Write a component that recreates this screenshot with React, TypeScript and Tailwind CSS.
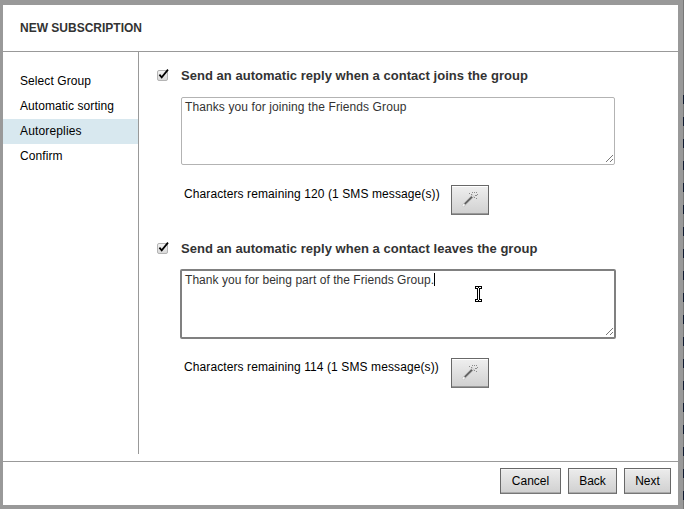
import React from "react";

const steps = ["Select Group", "Automatic sorting", "Autoreplies", "Confirm"];
const edgeMarks = Array.from({ length: 19 }, (_, i) => i);

function CheckBox() {
  return (
    <svg width="14" height="14" viewBox="0 0 14 14" className="shrink-0">
      <defs>
        <linearGradient id="box" x1="0" y1="0" x2="0" y2="1">
          <stop offset="0" stopColor="#f4f4f4" />
          <stop offset="1" stopColor="#d8d8d8" />
        </linearGradient>
      </defs>
      <rect x="1.5" y="2.5" width="10" height="10" rx="1.5" fill="url(#box)" stroke="#b4b4b4" />
      <path d="M3.4 6.6 L5.7 9.3 L12 1.6" fill="none" stroke="#000" strokeWidth="1.7" />
    </svg>
  );
}

function Wand() {
  return (
    <svg width="18" height="18" viewBox="0 0 18 18">
      <path d="M1.6 15.2 L12.6 4.2" stroke="#bdbdbd" strokeWidth="3" />
      <path d="M3.8 13 L11.2 5.6" stroke="#5c5c5c" strokeWidth="1.6" />
      <path d="M1.8 15 L3.4 13.4" stroke="#f4f4f4" strokeWidth="1.8" />
      <path d="M11 5.8 L12.6 4.2" stroke="#dedede" strokeWidth="1.6" />
      <g fill="#8c8c8c">
        <rect x="8" y="2" width="1" height="1" />
        <rect x="11" y="1" width="1" height="1" />
        <rect x="13" y="1" width="1" height="1" />
        <rect x="10" y="3" width="1" height="1" />
        <rect x="15" y="1" width="1" height="1" />
        <rect x="16" y="3" width="1" height="1" />
        <rect x="14" y="4" width="2" height="1" />
        <rect x="13" y="6" width="1" height="1" />
        <rect x="15" y="7" width="1" height="1" />
      </g>
    </svg>
  );
}

function Grip() {
  return (
    <svg width="8" height="8" viewBox="0 0 8 8" shapeRendering="crispEdges" className="absolute right-px bottom-px">
      <path d="M0.5 7.5 L7.5 0.5 M4.5 7.5 L7.5 4.5" stroke="#777" />
    </svg>
  );
}

function Reply({ title, message, remaining, focused = false }: { title: string; message: string; remaining: number; focused?: boolean }) {
  return (
    <section className="h-[173px]">
      <div className="flex h-4 items-center">
        <CheckBox />
        <h2 className="ml-[11px] pt-[2px] text-[13px] font-bold leading-4 tracking-[0.03px] whitespace-nowrap text-[#333]">{title}</h2>
      </div>
      <div
        className={
          focused
            ? "relative mt-[13px] ml-6 h-[70px] w-[436px] rounded-[2px] border-2 border-[#808080] px-[3px] pt-[2px]"
            : "relative mt-[14px] ml-[25px] h-[68px] w-[434px] rounded-[2px] border border-[#b3b3b3] px-[3px] pt-[2px]"
        }
      >
        <p className={focused ? "flex text-xs leading-[14px] tracking-[0.05px] text-[#333]" : "flex text-xs leading-[14px] tracking-[0.1px] text-[#333]"}>
          {message}
          {focused && <span className="h-[13px] w-px bg-black" />}
        </p>
        <Grip />
      </div>
      <div className={focused ? "mt-[19px] ml-7 flex items-start" : "mt-5 ml-7 flex items-start"}>
        <span className="w-[267px] pt-px text-xs leading-4 tracking-[0.1px] whitespace-nowrap text-black">
          Characters remaining {remaining} (1 SMS message(s))
        </span>
        <button className="flex h-[30px] w-[38px] items-center justify-center border border-[#686868] border-b-[#777] bg-linear-to-b from-[#efefef] to-[#d0d0d0] shadow-[inset_0_1px_0_#fff,inset_0_-1px_0_#999]">
          <Wand />
        </button>
      </div>
    </section>
  );
}

function FooterButton({ label, className }: { label: string; className: string }) {
  return (
    <button
      className={`h-[26px] border border-[#686868] border-b-[#777] bg-linear-to-b from-[#ececec] to-[#d0d0d0] text-xs leading-6 text-black shadow-[inset_0_1px_0_#f5f5f5,inset_0_-1px_0_#aaa] ${className}`}
    >
      {label}
    </button>
  );
}

export default function App() {
  return (
    <div className="relative h-[509px] w-[684px] overflow-hidden bg-[#999] pt-[5px] pl-[3px] font-['Liberation_Sans',Arial,sans-serif]">
      <main className="flex h-[500px] w-[675px] flex-col bg-white">
        <header className="flex h-[47px] items-center border-b border-[#999] pl-[17px]">
          <h1 className="text-xs font-bold text-[#333]">NEW SUBSCRIPTION</h1>
        </header>
        <div className="flex h-[409px]">
          <nav className="h-[402px] w-[136px] border-r border-[#999] pt-[17px]">
            {steps.map((step) => (
              <div
                key={step}
                className={
                  step === "Autoreplies"
                    ? "h-[25px] bg-[#d8e8ef] pl-[17px] text-xs leading-[24px] tracking-[0.15px] text-black"
                    : "h-[25px] pl-[17px] text-xs leading-[24px] tracking-[0.08px] text-black"
                }
              >
                {step}
              </div>
            ))}
          </nav>
          <div className="pt-[15px] pl-[17px]">
            <Reply title="Send an automatic reply when a contact joins the group" message="Thanks you for joining the Friends Group" remaining={120} />
            <Reply title="Send an automatic reply when a contact leaves the group" message="Thank you for being part of the Friends Group." remaining={114} focused />
          </div>
        </div>
        <footer className="flex h-[44px] justify-end gap-[7px] border-t border-[#999] pt-[6px] pr-[7px]">
          <FooterButton label="Cancel" className="w-[61px]" />
          <FooterButton label="Back" className="w-[49px]" />
          <FooterButton label="Next" className="w-[47px]" />
        </footer>
      </main>
      <div className="absolute top-0 right-0 flex h-full w-px flex-col bg-[#777] pt-[95px]">
        {edgeMarks.map((i) => (
          <span key={i} className="mb-[13px] h-[9px] w-px shrink-0 bg-[#101a30]" />
        ))}
      </div>
      <svg width="7" height="16" viewBox="0 0 7 16" shapeRendering="crispEdges" className="absolute top-[286px] left-[475px]">
        <path d="M0 0H7V3H5V13H7V16H0V13H2V3H0Z" fill="#000" />
        <path d="M1 1H3V2H4V1H6V2H4V14H6V15H4V14H3V15H1V14H3V2H1Z" fill="#fff" />
      </svg>
    </div>
  );
}
